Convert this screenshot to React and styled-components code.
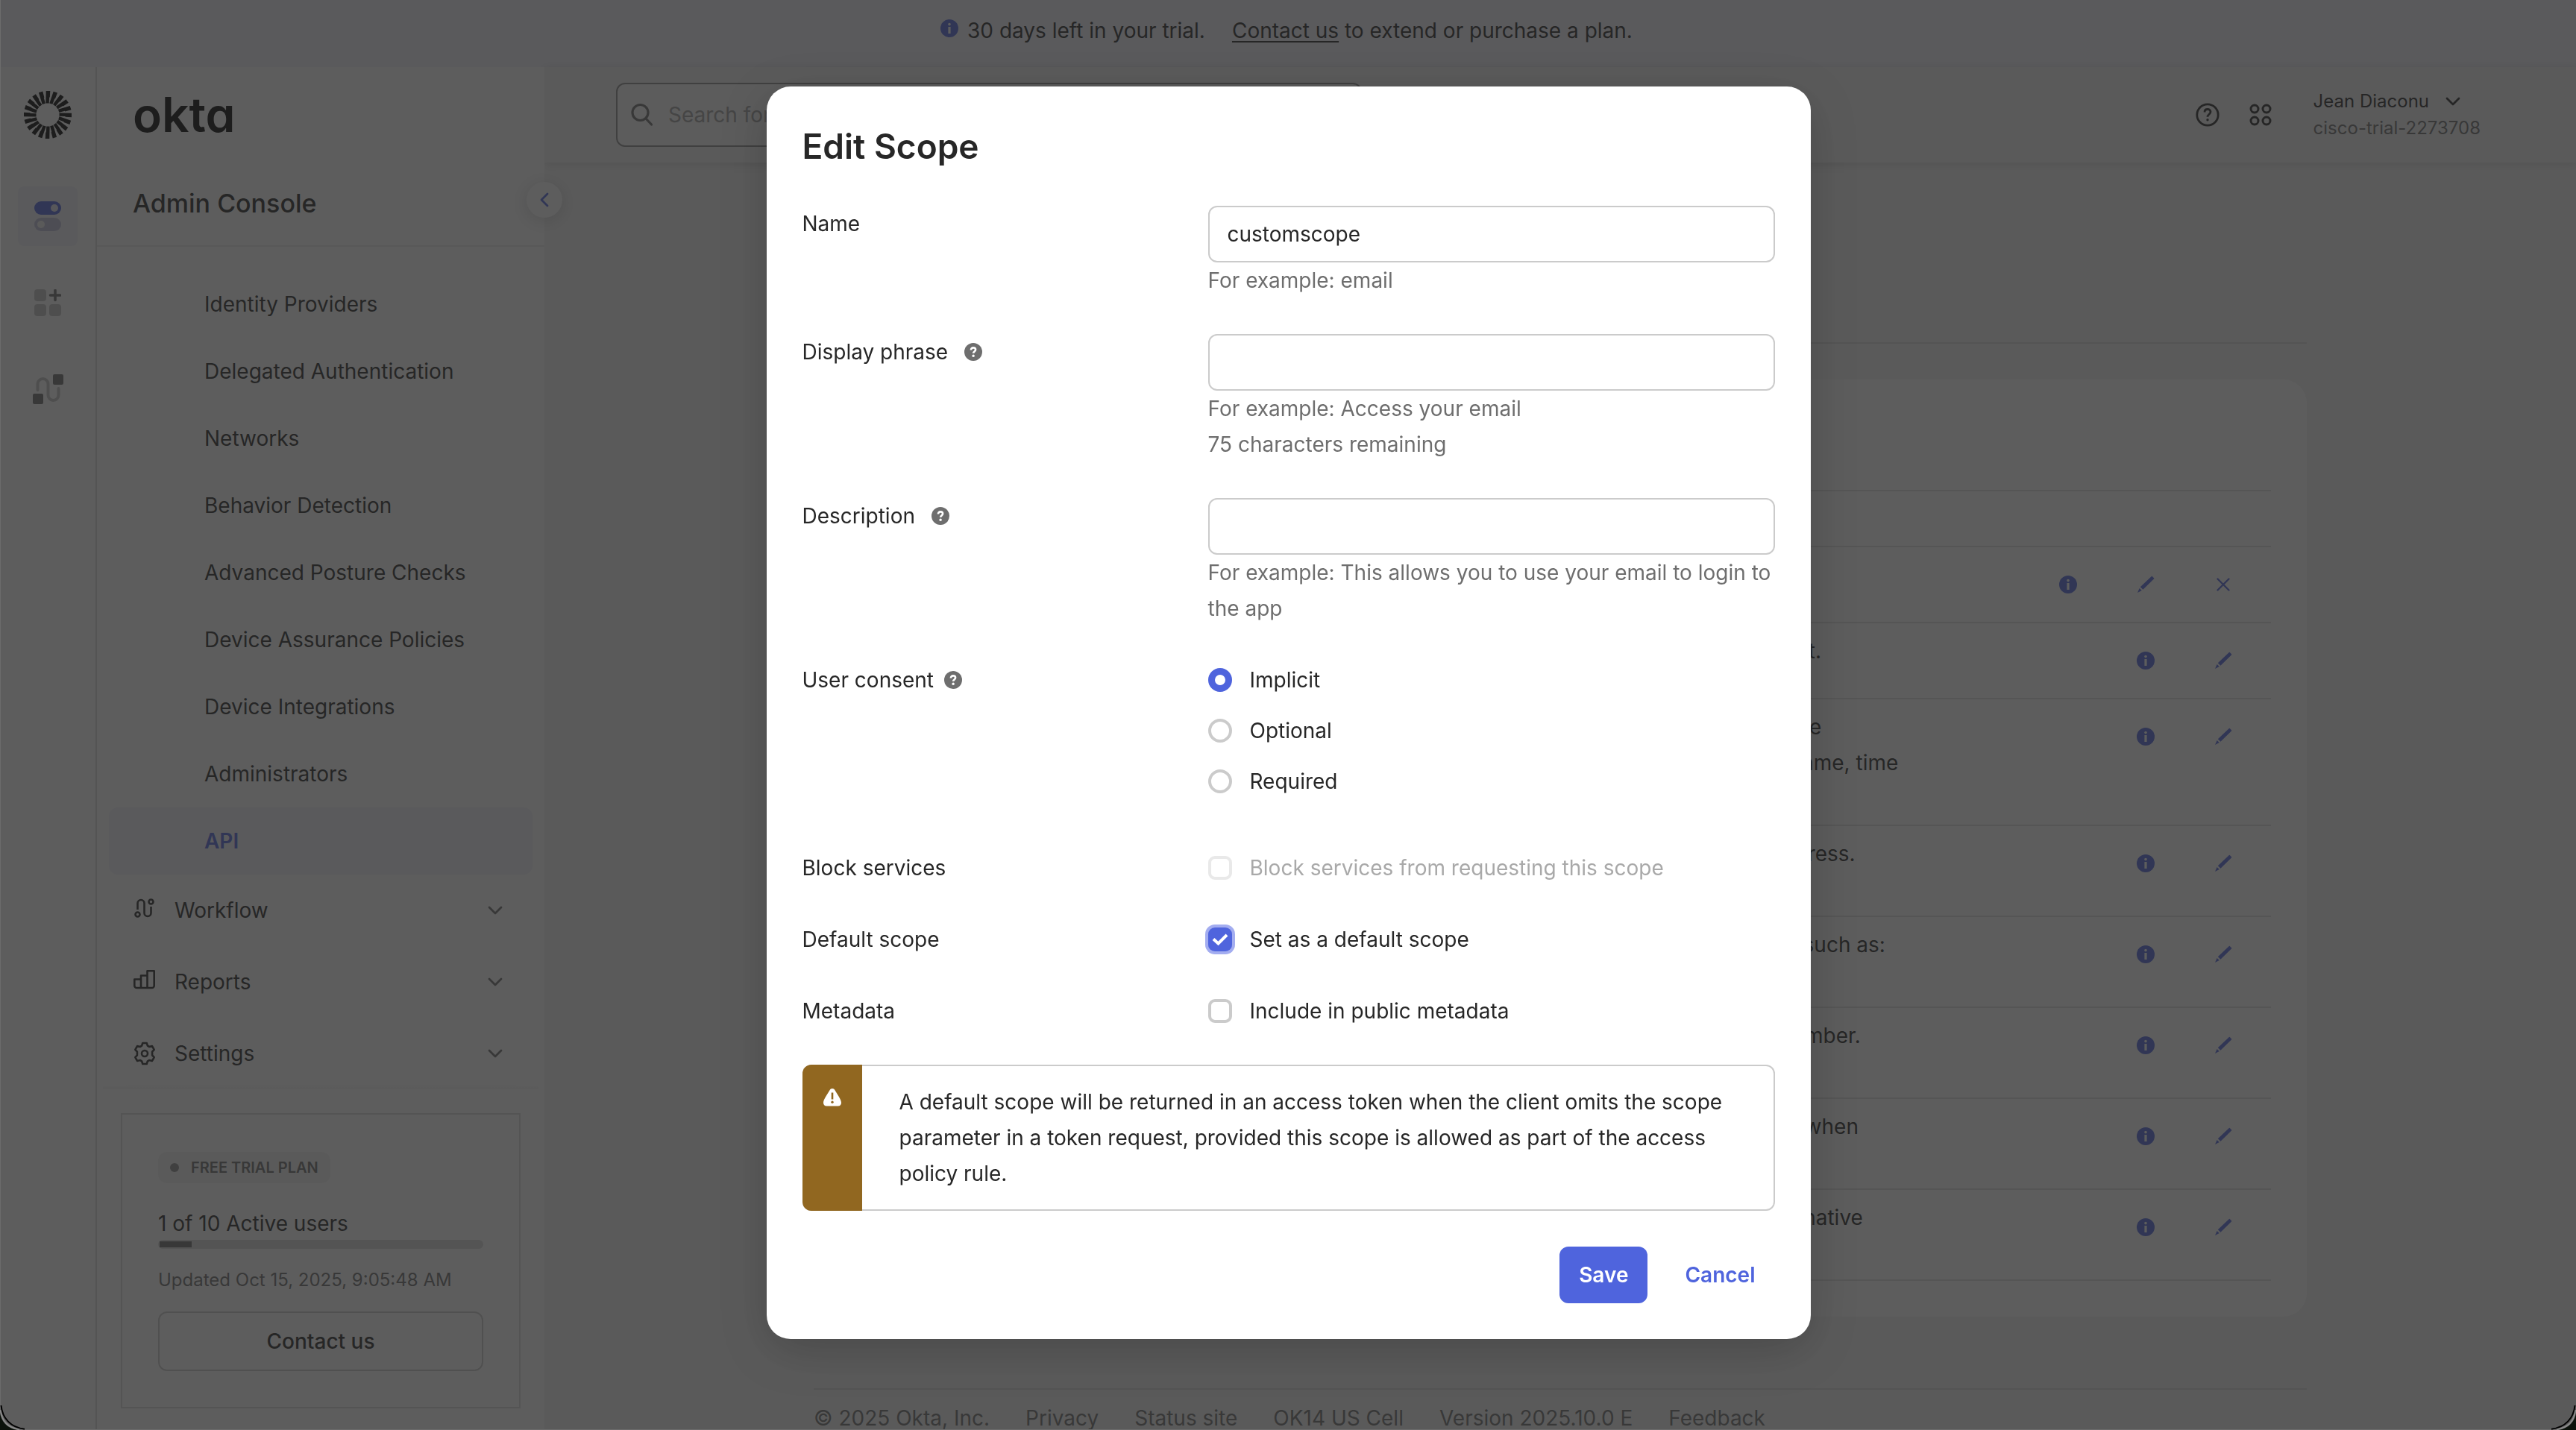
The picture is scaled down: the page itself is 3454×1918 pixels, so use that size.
import React from "react";
import styled, { createGlobalStyle, css } from "styled-components";

const ink = "#272727";
const muted = "#6e6e6e";
const line = "#cbcbcb";
const hairline = "#dcdcdc";
const blue = "#4f64dd";
const tint = "#f3f3fb";

const GlobalStyle = createGlobalStyle`
  * { box-sizing: border-box; }
  html, body { margin: 0; padding: 0; }
  body {
    background: #f4f4f4;
    color: ${ink};
    font-family: Inter, "Liberation Sans", sans-serif;
    font-size: 28px;
    line-height: 48px;
  }
  button, input { font: inherit; color: inherit; }
  button { cursor: pointer; border: 0; background: none; padding: 0; }
  a { color: inherit; text-decoration: none; }
  svg { display: block; flex: none; }
`;

const Page = styled.div`
  display: flex;
  flex-direction: column;
  height: 100vh;
  overflow: hidden;
`;

/* ---------- trial banner ---------- */
const Banner = styled.div`
  flex: none;
  height: 90px;
  padding: 0 4px 8px 0;
  display: flex;
  align-items: center;
  justify-content: center;
  background: ${tint};
`;
const BannerIcon = styled.span`
  margin-right: 12px;
  padding-bottom: 6px;
`;
const BannerAction = styled.span`
  margin-left: 36px;
  a { text-decoration: underline; text-underline-offset: 4px; }
`;

const Body = styled.div`
  flex: 1;
  min-height: 0;
  display: flex;
`;

/* ---------- icon rail ---------- */
const Rail = styled.nav`
  flex: none;
  width: 130px;
  padding: 32px 24px;
  background: #fff;
  border-right: 2px solid ${hairline};
  display: flex;
  flex-direction: column;
  align-items: center;
  gap: 36px;
`;
const RailLogo = styled.a`
  display: flex;
  margin-bottom: 28px;
`;
const RailButton = styled.button`
  width: 80px;
  height: 80px;
  border-radius: 8px;
  display: grid;
  place-items: center;
  background: ${(p) => (p.$active ? tint : "transparent")};
`;

/* ---------- sidebar ---------- */
const Sidebar = styled.aside`
  flex: none;
  width: 600px;
  background: #fff;
  display: flex;
  flex-direction: column;
  position: relative;
  z-index: 2;
`;
const Wordmark = styled.a`
  margin: 24px 48px 0;
  height: 80px;
  display: flex;
  align-items: center;
  font-size: 64px;
  line-height: 80px;
  font-weight: 600;
  font-feature-settings: "cv11";
  color: #000;
`;
const ConsoleTitle = styled.h2`
  margin: 0;
  padding: 55px 48px 32px;
  font-size: 34px;
  line-height: 48px;
  font-weight: 500;
  border-bottom: 2px solid #ececec;
`;
const Collapse = styled.button`
  position: absolute;
  right: -24px;
  top: 154px;
  width: 48px;
  height: 48px;
  border-radius: 50%;
  background: #fff;
  color: ${blue};
  display: grid;
  place-items: center;
  box-shadow: 0 4px 24px rgba(29, 29, 33, 0.2);
`;
const NavList = styled.ul`
  list-style: none;
  margin: 0;
  padding: 32px 16px 0;
`;
const NavLink = styled.a`
  display: flex;
  align-items: center;
  height: 90px;
  padding-left: 128px;
  border-radius: 12px;
  ${(p) => p.$active && css`
    background: ${tint};
    color: ${blue};
    font-weight: 600;
  `}
`;
const GroupButton = styled.button`
  width: 100%;
  height: 96px;
  padding: 0 34px 0 32px;
  display: grid;
  grid-template-columns: 32px 1fr 28px;
  column-gap: 24px;
  align-items: center;
  text-align: left;
  > svg:last-child { color: ${muted}; }
`;
const NavShade = styled.div`
  height: 8px;
  margin: -8px 8px 0;
  background: linear-gradient(rgba(0, 0, 0, 0), rgba(0, 0, 0, 0.04));
  border-radius: 50% 50% 0 0;
`;
const PlanCard = styled.section`
  margin: 32px 32px 0;
  padding: 50px 48px 48px;
  border: 2px solid ${hairline};
  display: flex;
  flex-direction: column;
  align-items: stretch;
`;
const PlanBadge = styled.span`
  align-self: flex-start;
  display: flex;
  align-items: center;
  gap: 16px;
  height: 42px;
  padding: 0 16px;
  border-radius: 12px;
  background: #f4f4f4;
  color: ${muted};
  font-size: 20px;
  line-height: 24px;
  font-weight: 600;
  &::before {
    content: "";
    width: 12px;
    height: 12px;
    border-radius: 50%;
    background: #8c8c8c;
  }
`;
const PlanUsage = styled.div`
  margin-top: 32px;
  line-height: 44px;
`;
const PlanMeter = styled.div`
  height: 12px;
  border-radius: 6px;
  padding: 2px;
  background: ${hairline};
`;
const PlanMeterFill = styled.div`
  width: 10%;
  height: 8px;
  background: ${muted};
`;
const PlanUpdated = styled.span`
  margin: 24px 0;
  color: ${muted};
  font-size: 24px;
  line-height: 36px;
`;
const PlanButton = styled.button`
  height: 80px;
  border: 2px solid ${line};
  border-radius: 12px;
  font-weight: 500;
`;

/* ---------- main area ---------- */
const Main = styled.div`
  flex: 1;
  min-width: 0;
  display: flex;
  flex-direction: column;
`;
const TopBar = styled.header`
  flex: none;
  height: 128px;
  padding: 0 128px 0 96px;
  display: flex;
  align-items: center;
  background: #f4f4f4;
  box-shadow: 0 2px 12px rgba(29, 29, 33, 0.16);
  z-index: 1;
`;
const SearchBox = styled.label`
  width: 1000px;
  height: 86px;
  padding: 0 16px;
  display: flex;
  align-items: center;
  gap: 20px;
  background: #fafafa;
  border: 2px solid #8c8c8c;
  border-radius: 12px;
  input {
    flex: 1;
    border: 0;
    outline: 0;
    background: none;
    padding: 0;
  }
  input::placeholder { color: #a0a0a0; opacity: 1; }
`;
const TopActions = styled.div`
  margin-left: auto;
  display: flex;
  align-items: center;
  gap: 40px;
`;
const IconButton = styled.button`
  display: grid;
  place-items: center;
`;
const Account = styled.button`
  margin-left: 16px;
  font-size: 24px;
  line-height: 36px;
  text-align: left;
`;
const AccountName = styled.span`
  display: flex;
  align-items: center;
  gap: 20px;
`;
const AccountOrg = styled.span`
  display: block;
  color: ${muted};
`;
const Content = styled.main`
  flex: 1;
  width: 100%;
  max-width: 2002px;
  margin: 0 auto;
`;
const PageHead = styled.div`
  height: 243px;
  border-bottom: 2px solid ${hairline};
`;
const Card = styled.section`
  margin-top: 48px;
  padding: 148px 48px 48px;
  background: #fff;
  border-radius: 32px;
`;
const ScopeTable = styled.table`
  width: 100%;
  border-collapse: collapse;
  table-layout: fixed;
  tr { border-top: 2px solid #e0e0e0; }
  tbody tr:last-child { border-bottom: 2px solid #e0e0e0; }
  th { height: 75px; padding: 0; }
  td { padding: 0; vertical-align: top; }
  td:first-child { padding: 13px 0 11px 724px; white-space: nowrap; }
  th:last-child { width: 480px; }
`;
const RowActions = styled.div`
  display: flex;
  justify-content: flex-end;
  padding-right: 12px;
`;
const RowAction = styled.button`
  width: 104px;
  height: 100px;
  display: grid;
  place-items: center;
  color: ${blue};
`;
const Footer = styled.footer`
  margin-top: 96px;
  padding-top: 14px;
  border-top: 2px solid ${hairline};
  display: flex;
  gap: 48px;
  color: ${muted};
`;

/* ---------- dialog ---------- */
const Scrim = styled.div`
  position: fixed;
  inset: 0;
  z-index: 10;
  display: flex;
  justify-content: center;
  align-items: flex-start;
  padding-top: 116px;
  background: rgba(39, 39, 39, 0.75);
  border-left: 1px solid #6c6c6c;
  border-bottom: 1px solid #6c6c6c;
`;
const Corner = styled.svg`
  position: absolute;
  bottom: -1px;
  ${(p) => (p.$right ? css`right: 0; transform: scaleX(-1);` : css`left: -1px;`)}
`;
const Dialog = styled.form`
  width: 1400px;
  padding: 48px;
  display: flex;
  flex-direction: column;
  gap: 48px;
  background: #fff;
  border-radius: 32px;
  box-shadow: 0 16px 64px rgba(0, 0, 0, 0.2);
`;
const DialogTitle = styled.h1`
  margin: 0;
  font-size: 46px;
  line-height: 64px;
  font-weight: 600;
`;
const Row = styled.div`
  display: grid;
  grid-template-columns: 544px 1fr;
  align-items: start;
  padding-bottom: ${(p) => (p.$spaced ? "20px" : "0")};
`;
const RowLabel = styled.div`
  display: flex;
  align-items: center;
  gap: ${(p) => (p.$tight ? "14px" : "22px")};
`;
const TextInput = styled.input`
  width: 100%;
  height: 76px;
  display: block;
  padding: 0 24px;
  background: #fff;
  border: 2px solid ${line};
  border-radius: 12px;
  outline: 0;
`;
const Hint = styled.div`
  color: ${muted};
`;
const Options = styled.div`
  display: flex;
  flex-direction: column;
  gap: 20px;
`;
const Option = styled.label`
  display: flex;
  align-items: center;
  gap: 24px;
  color: ${(p) => (p.$disabled ? "#a9a9a9" : "inherit")};
`;
const control = css`
  appearance: none;
  flex: none;
  width: 32px;
  height: 32px;
  margin: 0;
  background: #fff;
  border: 4px solid ${line};
  outline: 0;
`;
const Radio = styled.input`
  ${control}
  border-radius: 50%;
  &:checked { border: 9px solid ${blue}; }
`;
const Check = styled.input`
  ${control}
  border-radius: 9px;
  &:disabled { border-color: #e9e9e9; }
  &:checked {
    border: 0;
    background: ${blue};
    box-shadow: 0 0 0 4px #a3adf0;
  }
`;
const CheckWrap = styled.span`
  display: grid;
  > * { grid-area: 1 / 1; }
  svg { pointer-events: none; z-index: 1; }
`;
const Alert = styled.div`
  display: flex;
  border: 2px solid ${line};
  border-left: 0;
  border-radius: 12px;
`;
const AlertMark = styled.div`
  width: 80px;
  padding-top: 32px;
  display: flex;
  justify-content: center;
  margin: -2px 0;
  border-radius: 12px 0 0 12px;
  background: #916720;
`;
const AlertText = styled.p`
  flex: 1;
  margin: 0;
  padding: 24px 50px;
`;
const Actions = styled.div`
  display: flex;
  justify-content: flex-end;
  gap: 24px;
`;
const ActionButton = styled.button`
  height: 76px;
  padding: 0 26px;
  border-radius: 12px;
  font-weight: 600;
  color: ${(p) => (p.$primary ? "#fff" : blue)};
  background: ${(p) => (p.$primary ? blue : "transparent")};
`;

/* ---------- icons ---------- */
const InfoIcon = () => (
  <svg width="24" height="24" viewBox="0 0 24 24">
    <circle cx="12" cy="12" r="12" fill={blue} />
    <circle cx="12" cy="6.6" r="1.8" fill="#fff" />
    <rect x="10.4" y="10" width="3.2" height="9" fill="#fff" />
  </svg>
);
const PencilIcon = () => (
  <svg width="24" height="24" viewBox="0 0 24 24" fill="currentColor">
    <path d="M19.6 1.2a1 1 0 0 1 1.4 0l2 2a1 1 0 0 1 0 1.4L8.400 18.800l-3.600-3.600z" />
    <path d="M3.6 16.9l3.2 3.2L1 23z" />
  </svg>
);
const CrossIcon = () => (
  <svg width="24" height="24" viewBox="0 0 24 24" stroke="currentColor" strokeWidth="2.4" strokeLinecap="round">
    <path d="M4.500 4.500l15 15M19.500 4.500l-15 15" />
  </svg>
);
const HelpDot = () => (
  <svg width="24" height="24" viewBox="0 0 24 24" role="img" aria-label="Help">
    <circle cx="12" cy="12" r="12" fill={muted} />
    <path d="M8.900 9.400c0-1.800 1.300-3 3.100-3s3.100 1.100 3.100 2.700c0 2.400-3 2.300-3 4.700" fill="none" stroke="#fff" strokeWidth="2.600" />
    <circle cx="12.100" cy="17.200" r="1.700" fill="#fff" />
  </svg>
);
const Chevron = () => (
  <svg width="24" height="24" viewBox="0 0 24 24" fill="none" stroke="currentColor" strokeWidth="2.800" strokeLinecap="round" strokeLinejoin="round">
    <path d="M4 8l8 8 8-8" />
  </svg>
);
const ChevronLeft = () => (
  <svg width="24" height="24" viewBox="0 0 24 24" fill="none" stroke="currentColor" strokeWidth="2.8" strokeLinecap="round" strokeLinejoin="round">
    <path d="M16 4l-8 8 8 8" />
  </svg>
);
const Sunburst = () => (
  <svg width="64" height="64" viewBox="-32 -32 64 64" fill="#000">
    {Array.from({ length: 20 }, (_, i) => (
      <path key={i} transform={`rotate(${i * 18})`} d="M-2.300 -32h5.600l-.5 8.500h-.7l-.4 8h-4.300z" />
    ))}
  </svg>
);
const TogglesIcon = () => (
  <svg width="36" height="40" viewBox="0 0 36 40">
    <rect width="36" height="18" rx="9" fill={blue} />
    <circle cx="27" cy="9" r="5" fill="#e8e8f4" />
    <rect y="22" width="36" height="18" rx="9" fill="#c0c0dc" />
    <circle cx="9" cy="31" r="5" fill="#f4f4f4" />
  </svg>
);
const AppsIcon = () => (
  <svg width="36" height="36" viewBox="0 0 36 36" fill="#c4c4c4">
    <rect width="16" height="16" rx="4" />
    <rect y="20" width="16" height="16" rx="4" />
    <rect x="20" y="20" width="16" height="16" rx="4" />
    <path d="M28 1.500v13M21.500 8h13" stroke={muted} strokeWidth="3.600" strokeLinecap="round" />
  </svg>
);
const FlowTilesIcon = () => (
  <svg width="41" height="41" viewBox="0 0 41 41">
    <path d="M6.500 21v-8a7 7 0 0 1 14 0v15a7 7 0 0 0 14 0v-9" fill="none" stroke="#c4c4c4" strokeWidth="4" strokeLinecap="round" />
    <rect x="27" width="14" height="14" rx="2" fill={muted} />
    <rect y="26" width="14" height="14" rx="2" fill={muted} />
  </svg>
);
const WorkflowIcon = () => (
  <svg width="32" height="32" viewBox="0 0 32 32" fill="none" stroke="currentColor" strokeWidth="2.600">
    <circle cx="24.500" cy="4.500" r="3" />
    <circle cx="6.500" cy="21.500" r="3" />
    <path d="M6.500 15V6.500a4.500 4.500 0 0 1 9 0v13a4.500 4.500 0 0 0 9 0V11" />
  </svg>
);
const ReportsIcon = () => (
  <svg width="32" height="32" viewBox="0 0 32 32" fill="none" stroke="currentColor" strokeWidth="2.600" strokeLinejoin="round">
    <path d="M2.300 12.500h8.700v11.500H5.300a3 3 0 0 1-3-3zM11 7.500h8.500V24H11zM19.500 1.300h9.200V21a3 3 0 0 1-3 3h-6.200z" />
  </svg>
);
const SettingsIcon = () => (
  <svg width="32" height="32" viewBox="0 0 32 32" fill="none" stroke="currentColor" strokeWidth="2.600" strokeLinejoin="round">
    <path d="M13.300 2h5.400l1.200 3.700 2.300 1.300 3.800-.9 2.700 4.700-2.600 2.900v4.600l2.600 2.900-2.700 4.700-3.800-.9-2.300 1.300-1.200 3.700h-5.400l-1.200-3.700L9.800 25 6 25.900l-2.700-4.700 2.600-2.900v-4.600l-2.600-2.900L6 6.100l3.800.9 2.300-1.300z" />
    <circle cx="16" cy="16" r="4" />
  </svg>
);
const SearchIcon = () => (
  <svg width="32" height="32" viewBox="0 0 32 32" fill="none" stroke={muted} strokeWidth="3.200" strokeLinecap="round">
    <circle cx="14.500" cy="13" r="10.500" />
    <path d="M22 21l7.500 8" />
  </svg>
);
const HelpCircle = () => (
  <svg width="32" height="32" viewBox="0 0 32 32" fill="none" stroke="currentColor" strokeWidth="2.800">
    <circle cx="16" cy="16" r="14.200" />
    <path d="M12 12.500c0-2.500 1.700-4 4-4s4 1.500 4 3.600c0 3.100-4 3.200-4 6.700" />
    <circle cx="16" cy="22.800" r="1.700" fill="currentColor" stroke="none" />
  </svg>
);
const GridDots = () => (
  <svg width="30" height="30" viewBox="0 0 30 30" fill="none" stroke="currentColor" strokeWidth="3">
    <circle cx="7" cy="7" r="5" />
    <circle cx="23" cy="7" r="5" />
    <circle cx="7" cy="23" r="5" />
    <circle cx="23" cy="23" r="5" />
  </svg>
);
const WarningIcon = () => (
  <svg width="24" height="24" viewBox="0 0 24 24" role="img" aria-label="Warning">
    <path d="M8.500 2.200C9.300.8 10.500 0 12 0s2.700.8 3.500 2.200c3 5 8.500 12.500 8.500 16.800 0 2.500-1.500 4.500-4.500 4.500h-15C1.500 23.500 0 21.500 0 19 0 14.700 5.500 7.200 8.500 2.200z" fill="#fff" />
    <path d="M12 5.500v9" stroke="#916720" strokeWidth="2.600" />
    <circle cx="12" cy="18.300" r="1.700" fill="#916720" />
  </svg>
);
const Tick = () => (
  <svg width="32" height="32" viewBox="0 0 32 32" fill="none" stroke="#fff" strokeWidth="4">
    <path d="M7 15.500l6.500 6L25 10" />
  </svg>
);
const WindowCorner = ({ right }) => (
  <Corner $right={right} width="40" height="40" viewBox="0 0 40 40" aria-hidden="true">
    <path d="M0 16C1 28 9 38 24 40H0z" fill="#0b120b" />
    <path d="M.8 13C2 27 9 36.500 26 39.300" fill="none" stroke="#8a8a8a" strokeWidth="2" />
    <path d="M1.500 7C3 24 14 36.500 33 38.800" fill="none" stroke="#000" strokeWidth="2" />
  </Corner>
);

/* ---------- data ---------- */
const navItems = [
  "Identity Providers",
  "Delegated Authentication",
  "Networks",
  "Behavior Detection",
  "Advanced Posture Checks",
  "Device Assurance Policies",
  "Device Integrations",
  "Administrators",
  "API",
];
const navGroups = [
  ["Workflow", WorkflowIcon],
  ["Reports", ReportsIcon],
  ["Settings", SettingsIcon],
];
const scopes = [
  { lines: [""], removable: true },
  { lines: ["Signals that a request is an OpenID request."] },
  { lines: ["The exact data varies based on what profile", "information you have provided, such as: name, time", "zone, picture, or birthday."] },
  { lines: ["This allows the app to view your email address.", "\u00a0"] },
  { lines: ["This allows the app to view your address, such as:", "street address, city, state, and zip code."] },
  { lines: ["This allows the app to view your phone number.", "\u00a0"] },
  { lines: ["This keeps you signed in to the app, even when", "you are not using it."] },
  { lines: ["This lets a device secret be shared with a native", "app."] },
];
const footerItems = ["© 2025 Okta, Inc.", "Privacy", "Status site", "OK14 US Cell", "Version 2025.10.0 E", "Feedback"];
const footerLinks = ["Privacy", "Status site", "Feedback"];

export default function App() {
  return (
    <>
      <GlobalStyle />
      <Page>
        <Banner>
          <BannerIcon><InfoIcon /></BannerIcon>
          <span>30 days left in your trial.</span>
          <BannerAction><a href="#contact">Contact us</a> to extend or purchase a plan.</BannerAction>
        </Banner>
        <Body>
          <Rail aria-label="Products">
            <RailLogo href="#home" aria-label="Home"><Sunburst /></RailLogo>
            <RailButton $active aria-label="Admin"><TogglesIcon /></RailButton>
            <RailButton aria-label="Add apps"><AppsIcon /></RailButton>
            <RailButton aria-label="Workflows"><FlowTilesIcon /></RailButton>
          </Rail>
          <Sidebar>
            <Wordmark href="#home">okta</Wordmark>
            <ConsoleTitle>Admin Console</ConsoleTitle>
            <Collapse aria-label="Collapse menu"><ChevronLeft /></Collapse>
            <NavList>
              {navItems.map((item) => (
                <li key={item}><NavLink href="#nav" $active={item === "API"}>{item}</NavLink></li>
              ))}
              {navGroups.map(([label, Icon]) => (
                <li key={label}><GroupButton><Icon /><span>{label}</span><Chevron /></GroupButton></li>
              ))}
            </NavList>
            <NavShade />
            <PlanCard>
              <PlanBadge>FREE TRIAL PLAN</PlanBadge>
              <PlanUsage>1 of 10 Active users</PlanUsage>
              <PlanMeter><PlanMeterFill /></PlanMeter>
              <PlanUpdated>Updated Oct 15, 2025, 9:05:48 AM</PlanUpdated>
              <PlanButton>Contact us</PlanButton>
            </PlanCard>
          </Sidebar>
          <Main>
            <TopBar>
              <SearchBox>
                <SearchIcon />
                <input type="search" aria-label="Search" placeholder="Search for people, apps and groups" />
              </SearchBox>
              <TopActions>
                <IconButton aria-label="Help"><HelpCircle /></IconButton>
                <IconButton aria-label="Apps"><GridDots /></IconButton>
                <Account>
                  <AccountName>Jean Diaconu <Chevron /></AccountName>
                  <AccountOrg>cisco-trial-2273708</AccountOrg>
                </Account>
              </TopActions>
            </TopBar>
            <Content>
              <PageHead />
              <Card>
                <ScopeTable>
                  <thead>
                    <tr><th aria-label="Description" /><th aria-label="Actions" /></tr>
                  </thead>
                  <tbody>
                    {scopes.map((scope, i) => (
                      <tr key={i}>
                        <td>{scope.lines.map((text) => <div key={text}>{text}</div>)}</td>
                        <td>
                          <RowActions>
                            <RowAction aria-label="Details"><InfoIcon /></RowAction>
                            <RowAction aria-label="Edit"><PencilIcon /></RowAction>
                            {scope.removable && <RowAction aria-label="Delete"><CrossIcon /></RowAction>}
                          </RowActions>
                        </td>
                      </tr>
                    ))}
                  </tbody>
                </ScopeTable>
              </Card>
              <Footer>
                {footerItems.map((item) =>
                  footerLinks.includes(item) ? <a key={item} href="#footer">{item}</a> : <span key={item}>{item}</span>
                )}
              </Footer>
            </Content>
          </Main>
        </Body>
      </Page>

      <Scrim>
        <WindowCorner />
        <WindowCorner right />
        <Dialog role="dialog" aria-modal="true" aria-labelledby="dialog-title" onSubmit={(e) => e.preventDefault()}>
          <DialogTitle id="dialog-title">Edit Scope</DialogTitle>
          <Row>
            <RowLabel><label htmlFor="name">Name</label></RowLabel>
            <div>
              <TextInput id="name" type="text" defaultValue="customscope" />
              <Hint>For example: email</Hint>
            </div>
          </Row>
          <Row>
            <RowLabel><label htmlFor="phrase">Display phrase</label><HelpDot /></RowLabel>
            <div>
              <TextInput id="phrase" type="text" />
              <Hint>For example: Access your email</Hint>
              <Hint>75 characters remaining</Hint>
            </div>
          </Row>
          <Row>
            <RowLabel><label htmlFor="description">Description</label><HelpDot /></RowLabel>
            <div>
              <TextInput id="description" type="text" />
              <Hint>For example: This allows you to use your email to login to the app</Hint>
            </div>
          </Row>
          <Row $spaced>
            <RowLabel $tight><span id="consent">User consent</span><HelpDot /></RowLabel>
            <Options role="radiogroup" aria-labelledby="consent">
              {["Implicit", "Optional", "Required"].map((item) => (
                <Option key={item}>
                  <Radio type="radio" name="consent" defaultChecked={item === "Implicit"} />
                  {item}
                </Option>
              ))}
            </Options>
          </Row>
          <Row>
            <RowLabel>Block services</RowLabel>
            <Option $disabled><Check type="checkbox" disabled />Block services from requesting this scope</Option>
          </Row>
          <Row>
            <RowLabel>Default scope</RowLabel>
            <Option><CheckWrap><Check type="checkbox" defaultChecked /><Tick /></CheckWrap>Set as a default scope</Option>
          </Row>
          <Row>
            <RowLabel>Metadata</RowLabel>
            <Option><Check type="checkbox" />Include in public metadata</Option>
          </Row>
          <Alert>
            <AlertMark><WarningIcon /></AlertMark>
            <AlertText>
              A default scope will be returned in an access token when the client omits the scope parameter in a
              token request, provided this scope is allowed as part of the access policy rule.
            </AlertText>
          </Alert>
          <Actions>
            <ActionButton $primary type="submit">Save</ActionButton>
            <ActionButton type="button">Cancel</ActionButton>
          </Actions>
        </Dialog>
      </Scrim>
    </>
  );
}
